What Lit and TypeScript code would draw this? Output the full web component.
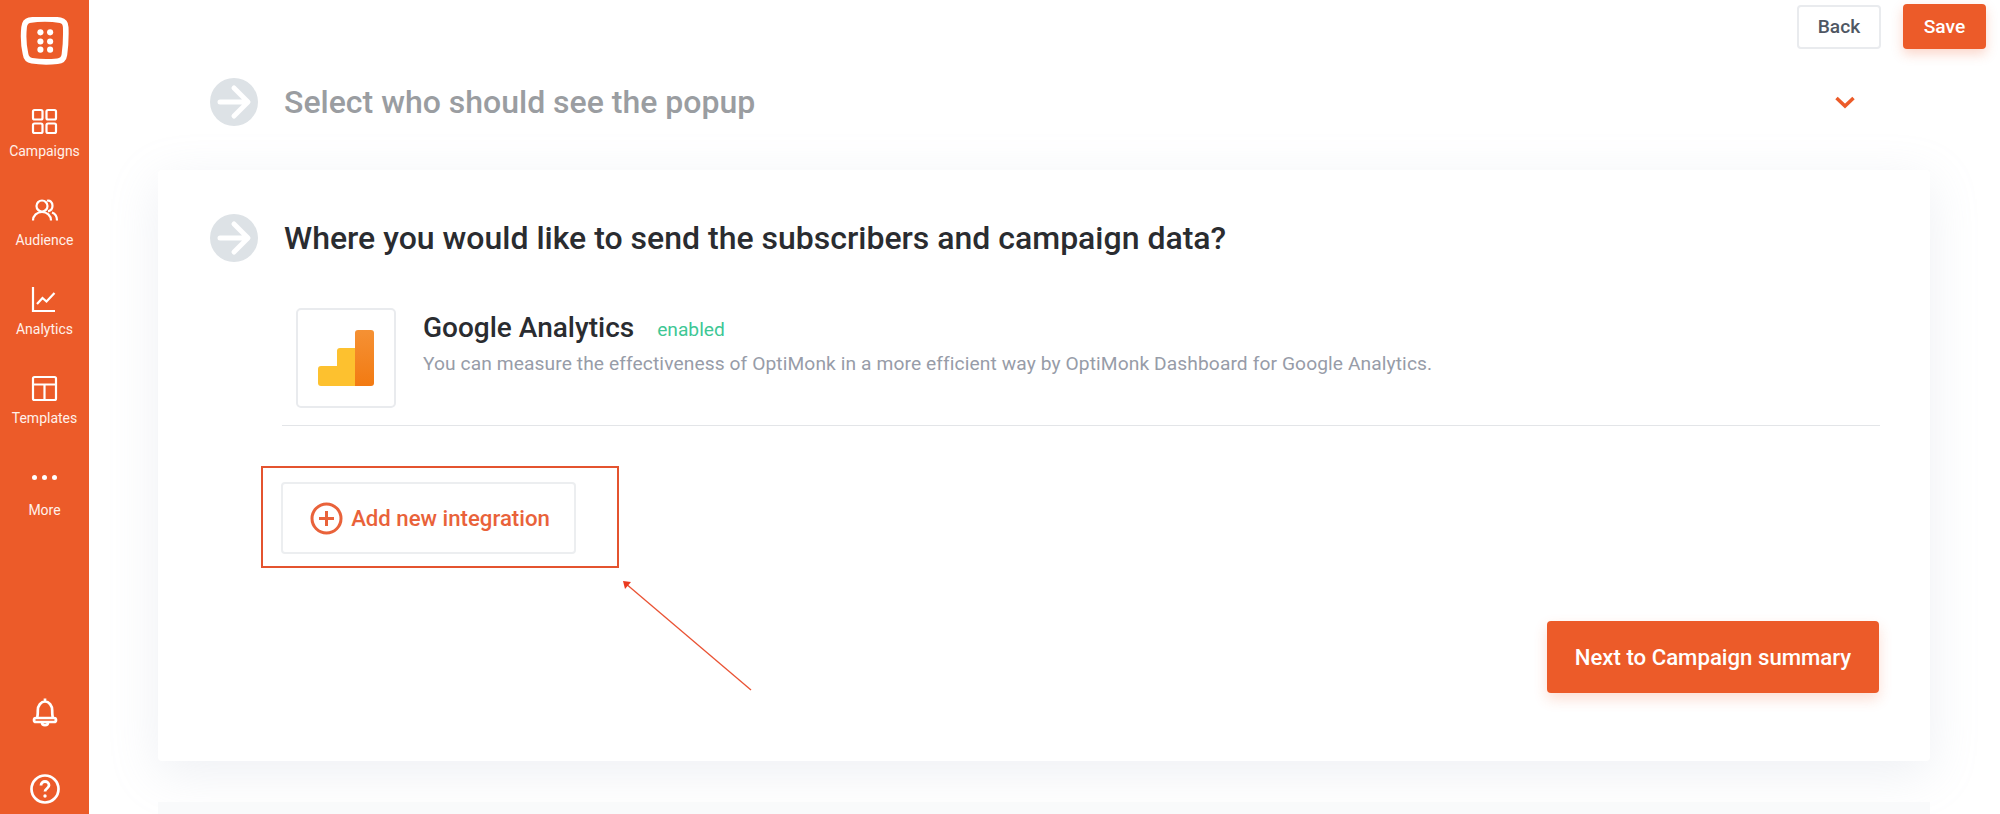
import { LitElement, html, css, svg } from "lit";
import { customElement } from "lit/decorators.js";

const navIcons: Record<string, unknown> = {
  campaigns: svg`<rect x="3" y="3" width="9.5" height="9.5" rx="1.5"/><rect x="16.5" y="3" width="9.5" height="9.5" rx="1.5"/><rect x="3" y="16.5" width="9.5" height="9.5" rx="1.5"/><rect x="16.5" y="16.5" width="9.5" height="9.5" rx="1.5"/>`,
  audience: svg`<circle cx="12" cy="10" r="5.5"/><path d="M3 24.500c0-5 4-8.500 9-8.500s9 3.500 9 8.500"/><path d="M17 4.800c3-.8 5.500 1.500 5.500 5 0 3-2 5-4.500 5.500"/><path d="M22 16.500c3 1 5 4 5 8"/>`,
  analytics: svg`<path d="M3 2v24h22"/><path d="M7 19l5.500-6 4 3.500L24.500 8"/>`,
  templates: svg`<rect x="3" y="3" width="23" height="23" rx="1.500"/><path d="M3 10.500h23M14.500 10.500V26"/>`,
};

@customElement("app-root")
export class AppRoot extends LitElement {
  static styles = css`
    :host { display: block; width: 2000px; height: 814px; overflow: hidden; background: #fff; font-family: Roboto, "Liberation Sans", sans-serif; position: relative; }
    .page { display: flex; height: 814px; }
    .side { width: 89px; flex: none; background: #ec5b29; display: flex; flex-direction: column; align-items: center; color: #fff; }
    .logo { margin-top: 17px; margin-right: 1px; width: 49px; height: 49px; display: block; flex: none; }
    .nav { margin-top: 41px; display: flex; flex-direction: column; width: 100%; }
    .item { height: 89px; display: flex; flex-direction: column; align-items: center; font-size: 14px; line-height: 16px; font-weight: 400; color: #fff1ea; }
    .item svg { width: 29px; height: 29px; fill: none; stroke: #fff; stroke-width: 2.200; margin-bottom: 7px; flex: none; }
    .item.more svg { margin-bottom: 10px; }
    .bottom { margin-top: auto; display: flex; flex-direction: column; align-items: center; gap: 45px; height: 118px; }
    .bottom svg { width: 32px; height: 32px; fill: none; stroke: #fff; stroke-width: 2.700; flex: none; }
    .main { flex: 1; min-width: 0; display: flex; flex-direction: column; }
    .top { display: flex; justify-content: flex-end; align-items: center; gap: 22px; padding: 4px 14px 0 0; height: 45px; flex: none; }
    .btn { box-sizing: border-box; display: flex; align-items: center; justify-content: center; border-radius: 4px; font-weight: 500; }
    .back { width: 84px; height: 44px; border: 2px solid #e9ebee; color: #4f5763; font-size: 19.2px; background: #fff; }
    .save { width: 83px; height: 45px; background: #ec5b29; color: #fff; font-size: 19.2px; box-shadow: 0 5px 12px rgba(240,92,42,.25); }
    .step { margin-left: 69px; width: 1772px; box-sizing: border-box; flex: none; }
    .head { display: flex; align-items: center; gap: 26px; }
    .head svg { width: 48px; height: 48px; flex: none; }
    h2 { margin: 0; font-size: 32px; line-height: 40px; font-weight: 500; color: #2a2c30; }
    .closed { display: flex; align-items: center; justify-content: space-between; padding: 29px 74px 0 52px; }
    .closed h2 { color: #9a9da1; }
    .chev { width: 22px; height: 14px; fill: none; stroke: #ec5b29; stroke-width: 3.500; }
    .card { margin-top: 44px; height: 591px; background: #fff; border-radius: 4px; box-shadow: 0 12px 50px rgba(170,182,198,.2); padding: 44px 52px 0; }
    .int { box-sizing: border-box; margin: 46px 0 0 72px; width: 1598px; height: 118px; display: flex; align-items: flex-start; gap: 27px; border-bottom: 1px solid #e3e5e8; padding-left: 14px; }
    .tile { box-sizing: border-box; flex: none; width: 100px; height: 100px; border: 2px solid #e9ebee; border-radius: 5px; display: flex; align-items: center; justify-content: center; }
    .tile svg { width: 56px; height: 56px; }
    .info { padding-top: 3px; }
    .title { display: flex; align-items: baseline; gap: 23px; }
    .name { font-size: 28px; line-height: 34px; font-weight: 500; color: #2a2c30; }
    .on { font-size: 19.2px; color: #3ec795; font-weight: 400; position: relative; top: -1px; }
    .desc { margin-top: 7px; font-size: 19.2px; line-height: 24px; color: #979ca8; letter-spacing: .1px; white-space: nowrap; }
    .add { box-sizing: border-box; margin: 56px 0 0 71px; width: 295px; height: 72px; border: 2px solid #eceef0; border-radius: 4px; display: flex; align-items: center; justify-content: center; gap: 8px; color: #e9623a; font-size: 22.2px; font-weight: 500; padding-left: 3px; }
    .add svg { width: 33px; height: 33px; fill: none; stroke: #e9623a; stroke-width: 3; flex: none; }
    .foot { display: flex; justify-content: flex-end; margin-top: 67px; width: 1669px; }
    .next { width: 332px; height: 72px; background: #ec5b29; color: #fff; font-size: 22.2px; box-shadow: 0 6px 14px rgba(240,92,42,.2); }
    .ghost { margin: 41px 0 0 69px; width: 1772px; height: 40px; background: #f9fafb; flex: none; }
    .mark { position: absolute; left: 261px; top: 466px; width: 358px; height: 102px; box-sizing: border-box; border: 2px solid #e4532f; }
    .arrow { position: absolute; left: 610px; top: 570px; width: 150px; height: 130px; fill: none; overflow: visible; }
  `;

  private arrowCircle() {
    return html`<svg viewBox="0 0 48 48"><circle cx="24" cy="24" r="24" fill="#dde2e6"/><path d="M10 24h27M24 10l14 14-14 14" fill="none" stroke="#fff" stroke-width="5" stroke-linecap="round" stroke-linejoin="round"/></svg>`;
  }

  render() {
    const items = [
      ["campaigns", "Campaigns"],
      ["audience", "Audience"],
      ["analytics", "Analytics"],
      ["templates", "Templates"],
    ];
    return html`
      <div class="page">
        <aside class="side">
          <svg class="logo" viewBox="0 0 48 48">
            <path d="M9 3.200C18 1.800 31 1.800 39.500 3.200c3.500.7 5.200 3 5.300 6.800.3 9 0 18-1.300 27-.5 3.800-3 6-6.800 6.400-8.200.8-17 .8-25-.5-3.800-.6-5.800-3-6.300-6.800C3.500 28 3.200 18 4 10c.4-3.800 2-6.100 5-6.800z" fill="none" stroke="#fff" stroke-width="5.500"/>
            ${[15, 24, 32].map((cy) => svg`<circle cx="20" cy="${cy}" r="3" fill="#fff"/><circle cx="29.500" cy="${cy}" r="3" fill="#fff"/>`)}
          </svg>
          <nav class="nav">
            ${items.map(([k, label]) => html`<div class="item"><svg viewBox="0 0 29 29">${navIcons[k]}</svg><span>${label}</span></div>`)}
            <div class="item more">
              <svg viewBox="0 0 29 29" style="stroke:none;fill:#fff"><circle cx="4.500" cy="14.500" r="2.500"/><circle cx="14.500" cy="14.500" r="2.500"/><circle cx="24.500" cy="14.500" r="2.500"/></svg>
              <span>More</span>
            </div>
          </nav>
          <div class="bottom">
            <svg viewBox="0 0 32 32"><path d="M16 2.500v3M8 22c.8-2 .8-4 .8-7.500C8.800 9.500 12 5.500 16 5.500s7.200 4 7.200 9c0 3.500 0 5.500.8 7.500"/><rect x="5" y="22" width="22" height="4" rx="2"/><path d="M13 26.500c0 1.800 1.500 2.700 3 2.700s3-.9 3-2.700"/></svg>
            <svg viewBox="0 0 32 32"><circle cx="16" cy="16" r="13.500"/><path d="M12 12.500c0-2.500 2-4 4-4s4 1.500 4 3.800c0 3.200-4 3.200-4 6.200" stroke-width="2.800"/><circle cx="16" cy="23" r="1.700" fill="#fff" stroke="none"/></svg>
          </div>
        </aside>
        <main class="main">
          <div class="top">
            <div class="btn back">Back</div>
            <div class="btn save">Save</div>
          </div>
          <section class="step closed">
            <div class="head">${this.arrowCircle()}<h2>Select who should see the popup</h2></div>
            <svg class="chev" viewBox="0 0 22 14"><path d="M2.500 3l8.500 8 8.500-8"/></svg>
          </section>
          <section class="step card">
            <div class="head">${this.arrowCircle()}<h2>Where you would like to send the subscribers and campaign data?</h2></div>
            <div class="int">
              <div class="tile">
                <svg viewBox="0 0 56 56">
                  <defs>
                    <linearGradient id="ga1" x1="0" y1="0" x2="0" y2="1"><stop offset="0" stop-color="#f59134"/><stop offset="1" stop-color="#f27a12"/></linearGradient>
                  </defs>
                  <path d="M3 56h34V18H22a3 3 0 0 0-3 3v15H3a3 3 0 0 0-3 3v14a3 3 0 0 0 3 3z" fill="#fdc12f"/>
                  <path d="M37 3a3 3 0 0 1 3-3h13a3 3 0 0 1 3 3v50a3 3 0 0 1-3 3H37z" fill="url(#ga1)"/>
                </svg>
              </div>
              <div class="info">
                <div class="title"><span class="name">Google Analytics</span><span class="on">enabled</span></div>
                <div class="desc">You can measure the effectiveness of OptiMonk in a more efficient way by OptiMonk Dashboard for Google Analytics.</div>
              </div>
            </div>
            <div class="add">
              <svg viewBox="0 0 33 33"><circle cx="16.500" cy="16.500" r="14.500"/><path d="M16.500 9v15M9 16.500h15"/></svg>
              <span>Add new integration</span>
            </div>
            <div class="foot"><div class="btn next">Next to Campaign summary</div></div>
          </section>
          <div class="ghost"></div>
        </main>
      </div>
      <div class="mark"></div>
      <svg class="arrow" viewBox="0 0 150 130">
        <path d="M141 120L15 13" stroke="#ea5233" stroke-width="1.300"/>
        <path d="M13 11l2 8 6-7z" fill="#ea3a20"/>
      </svg>
    `;
  }
}
